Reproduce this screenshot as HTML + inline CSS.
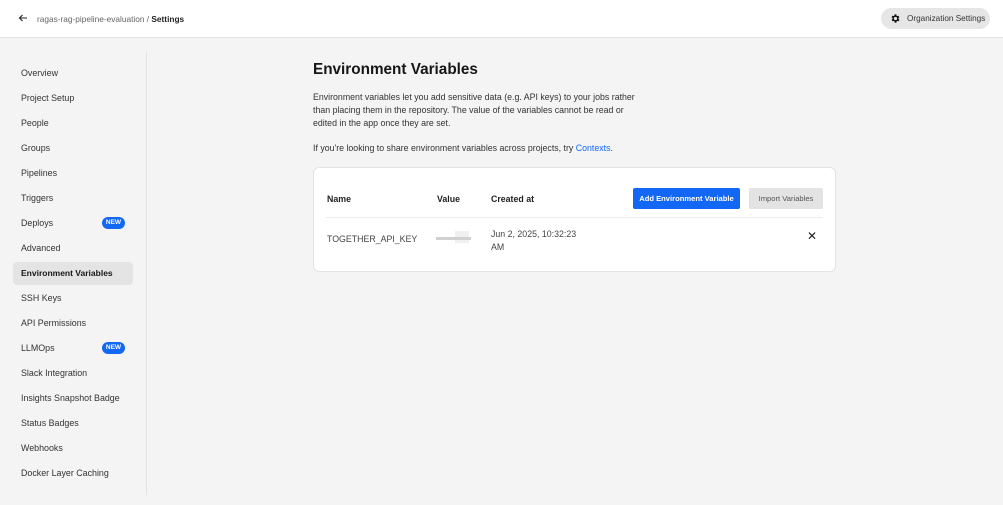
<!DOCTYPE html>
<html><head><style>
*{margin:0;padding:0;box-sizing:border-box}
body{width:1003px;height:505px;background:#f4f4f4;font-family:"Liberation Sans",sans-serif;position:relative;overflow:hidden;color:#161616}
.hdr{position:absolute;left:0;top:0;width:1003px;height:38px;background:#fff;border-bottom:1px solid #e3e3e3}
.crumb{position:absolute;left:37px;top:14px;font-size:8.3px;color:#666}
.crumb b{color:#222}
.back{position:absolute;left:18px;top:13px}
.org{position:absolute;left:881px;top:8px;width:109px;height:21px;border-radius:11px;background:#e6e6e6;font-size:8.2px;color:#333;padding-left:26px;line-height:21px}
.org svg{position:absolute;left:9px;top:5px}
.div{position:absolute;left:146px;top:52px;width:1px;height:443px;background:#e3e3e3}
.nav{position:absolute;left:21px;font-size:8.9px;color:#333}
.act{position:absolute;left:13px;top:262px;width:120px;height:23px;background:#e4e4e4;border-radius:4px}
.new{position:absolute;left:102px;width:23px;height:12px;border-radius:6px;background:#1367f5;color:#fff;font-size:6.5px;font-weight:bold;text-align:center;line-height:12px}
h1{position:absolute;left:313px;top:61px;font-size:15.3px;font-weight:bold;color:#161616}
.p{position:absolute;left:313px;font-size:8.8px;line-height:13px;color:#333}
.p a{color:#1367f5}
.card{position:absolute;left:313px;top:167px;width:523px;height:105px;background:#fff;border:1px solid #e3e3e3;border-radius:6px}
.t{position:absolute;font-size:8.8px}
.th{font-weight:bold;color:#222}
.add{position:absolute;left:319px;top:20px;width:107px;height:21px;background:#1367f5;border-radius:2px;color:#fff;font-size:7.6px;font-weight:bold;text-align:center;line-height:21px}
.imp{position:absolute;left:435px;top:20px;width:74px;height:21px;background:#e3e3e3;border-radius:2px;color:#555;font-size:7.6px;text-align:center;line-height:21px}
.line{position:absolute;left:12px;top:49px;width:497px;height:1px;background:#ececec}
</style></head><body>
<div class="hdr">
<svg class="back" width="10" height="10" viewBox="0 0 10 10"><path d="M9 5H1.5M4.5 2L1.5 5l3 3" stroke="#222" stroke-width="1.1" fill="none"/></svg>
<div class="crumb">ragas-rag-pipeline-evaluation / <b>Settings</b></div>
<div class="org"><svg width="11" height="11" viewBox="0 0 24 24"><path fill="#111" d="M19.4 13a7.5 7.5 0 000-2l2.1-1.6-2-3.5-2.5 1a7.6 7.6 0 00-1.7-1L15 3h-4l-.4 2.8a7.6 7.6 0 00-1.7 1l-2.5-1-2 3.5L6.6 11a7.5 7.5 0 000 2l-2.1 1.6 2 3.5 2.5-1a7.6 7.6 0 001.7 1L11 21h4l.4-2.8a7.6 7.6 0 001.7-1l2.5 1 2-3.5zM13 15.5a3.5 3.5 0 110-7 3.5 3.5 0 010 7z" transform="translate(-1 0)"/></svg>Organization Settings</div>
</div>
<div class="div"></div>
<div class="act"></div>
<div class="nav" style="top:68px">Overview</div>
<div class="nav" style="top:93px">Project Setup</div>
<div class="nav" style="top:118px">People</div>
<div class="nav" style="top:143px">Groups</div>
<div class="nav" style="top:168px">Pipelines</div>
<div class="nav" style="top:193px">Triggers</div>
<div class="nav" style="top:218px">Deploys</div><div class="new" style="top:217px">NEW</div>
<div class="nav" style="top:243px">Advanced</div>
<div class="nav" style="top:268px;color:#161616;font-weight:bold;font-size:8.5px">Environment Variables</div>
<div class="nav" style="top:293px">SSH Keys</div>
<div class="nav" style="top:318px">API Permissions</div>
<div class="nav" style="top:343px">LLMOps</div><div class="new" style="top:342px">NEW</div>
<div class="nav" style="top:368px">Slack Integration</div>
<div class="nav" style="top:393px">Insights Snapshot Badge</div>
<div class="nav" style="top:418px">Status Badges</div>
<div class="nav" style="top:443px">Webhooks</div>
<div class="nav" style="top:468px">Docker Layer Caching</div>
<h1>Environment Variables</h1>
<div class="p" style="top:91px">Environment variables let you add sensitive data (e.g. API keys) to your jobs rather<br>than placing them in the repository. The value of the variables cannot be read or<br>edited in the app once they are set.</div>
<div class="p" style="top:142px">If you're looking to share environment variables across projects, try <a>Contexts</a>.</div>
<div class="card">
<div class="t th" style="left:13px;top:26px">Name</div>
<div class="t th" style="left:123px;top:26px">Value</div>
<div class="t th" style="left:177px;top:26px">Created at</div>
<div class="add">Add Environment Variable</div>
<div class="imp">Import Variables</div>
<div class="line"></div>
<div class="t" style="left:13px;top:66px;color:#444">TOGETHER_API_KEY</div>
<div style="position:absolute;left:141px;top:63px;width:14px;height:12px;background:#f0f0f0"></div>
<div style="position:absolute;left:122px;top:69px;width:35px;height:3px;background:#d0d0d0"></div>
<div class="t" style="left:177px;top:60px;line-height:13px;color:#444">Jun 2, 2025, 10:32:23<br>AM</div>
<div class="t" style="left:493px;top:61px;font-size:12px;color:#222">✕</div>
</div>
</body></html>
